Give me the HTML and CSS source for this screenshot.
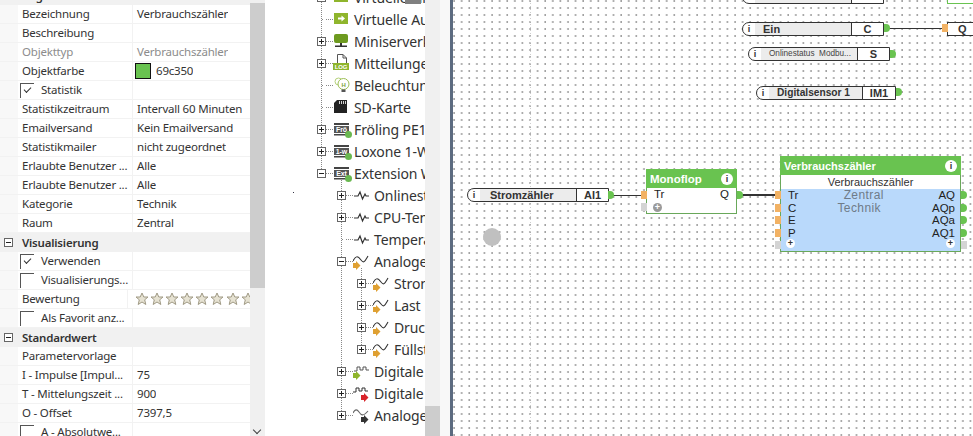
FILE: index.html
```html
<!DOCTYPE html>
<html>
  <head>
    <meta charset="utf-8" />
    <title>Verbrauchszähler</title>
    <link rel="stylesheet" href="styles.css">
  </head>
  <body>
    <!-- Icons -->
    <svg class="defs" width="0" height="0">
      <symbol id="i-vout" viewBox="0 0 20 20">
        <rect x="1" y="4" width="14" height="11" fill="#8fb52c"/>
        <path d="M5 8.500h3.500V6.500L12 9.500 8.500 12.500V10.500H5z" fill="#fff"/>
      </symbol>
      <symbol id="i-ms" viewBox="0 0 20 20">
        <rect x="1" y="3" width="14" height="9" rx="2" fill="#6d9a1f"/>
        <rect x="7" y="12" width="2" height="3" fill="#333"/>
        <rect x="2" y="14.500" width="12" height="1.500" fill="#333"/>
      </symbol>
      <symbol id="i-log" viewBox="0 0 20 20">
        <path d="M4.500 12V1.500H10L13.500 5V12M10 1.500V5H13.500" fill="#fff" stroke="#555"/>
        <rect x="0" y="10" width="16" height="7" fill="#8fb52c"/>
        <text x="8" y="15.500" class="ic-txt" font-size="6" text-anchor="middle">LOG</text>
      </symbol>
      <symbol id="i-bulb" viewBox="0 0 20 20">
        <circle cx="5.500" cy="6.500" r="3.500" fill="none" stroke="#b5d27a"/>
        <circle cx="10.500" cy="9" r="5.500" fill="#fff" stroke="#9dbf55"/>
        <rect x="8.500" y="14.500" width="4" height="2.500" fill="#555"/>
        <text x="10.500" y="11.500" class="ic-h" font-size="6" text-anchor="middle">H</text>
      </symbol>
      <symbol id="i-sd" viewBox="0 0 20 20">
        <path d="M4 3H14V16H1V6z" fill="#222"/>
        <path d="M6.500 4v3M8.500 4v3M10.500 4v3M12.500 4v3" stroke="#fff" stroke-width=".8"/>
      </symbol>
      <symbol id="i-ext" viewBox="0 0 20 20">
        <rect x="1" y="4" width="15" height="2" fill="#444"/>
        <rect x="1" y="7" width="15" height="7" fill="#555"/>
        <rect x="1" y="15" width="15" height="1.500" fill="#444"/>
      </symbol>
      <symbol id="i-pulse" viewBox="0 0 20 20">
        <path d="M1 11H5L7 7 9.500 14 12 9 13 11H16" fill="none" stroke="#333" stroke-width="1.200"/>
      </symbol>
      <symbol id="i-sine" viewBox="0 0 20 20">
        <path d="M0 10C3 4 5 5 8 9S12 10 15 5" fill="none" stroke="#333" stroke-width="1.100"/>
        <path d="M0 12H3V10L7.500 14.500 3 19V17H0z" fill="#dfa032"/>
      </symbol>
      <symbol id="i-dig" viewBox="0 0 20 20">
        <path d="M1 10H4V6H7V9H10V6H13V9H16" fill="none" stroke="#555"/>
        <path d="M0 12H3V10L7.500 14.500 3 19V17H0z" fill="#8fb52c"/>
      </symbol>
      <symbol id="i-digout" viewBox="0 0 20 20">
        <path d="M0 9H3V5H6V8H9V5H12V8H15" fill="none" stroke="#333"/>
        <path d="M8 12H11V10L15.500 14.500 11 19V17H8z" fill="#d8232a"/>
      </symbol>
      <symbol id="i-aout" viewBox="0 0 20 20">
        <path d="M0 8C2 4 4 4 6 7S10 12 15 6" fill="none" stroke="#666" stroke-width="1.100"/>
        <path d="M8 12H11V10L15.500 14.500 11 19V17H8z" fill="#333"/>
      </symbol>
      <symbol id="i-star" viewBox="0 0 14 14">
        <path d="M7 1L8.800 5H13L9.700 7.800 10.800 12.500 7 10 3.200 12.500 4.300 7.800 1 5H5.200z" fill="#e6e2d2" stroke="#a09a85"/>
      </symbol>
    </svg>

    <div class="app">
      <!-- Eigenschaften -->
      <section class="props">
        <div class="pg">
          <div class="pg-head"><span class="box minus"></span><b>Allgemein</b></div>
          <div class="pg-row"><span class="lab">Bezeichnung</span><span class="val">Verbrauchszähler</span></div>
          <div class="pg-row"><span class="lab">Beschreibung</span><span class="val"></span></div>
          <div class="pg-row off"><span class="lab">Objekttyp</span><span class="val">Verbrauchszähler</span></div>
          <div class="pg-row"><span class="lab">Objektfarbe</span><span class="val"><i class="swatch"></i>69c350</span></div>
          <div class="pg-row"><span class="lab chk on">Statistik</span><span class="val"></span></div>
          <div class="pg-row"><span class="lab">Statistikzeitraum</span><span class="val">Intervall 60 Minuten</span></div>
          <div class="pg-row"><span class="lab">Emailversand</span><span class="val">Kein Emailversand</span></div>
          <div class="pg-row"><span class="lab">Statistikmailer</span><span class="val">nicht zugeordnet</span></div>
          <div class="pg-row"><span class="lab">Erlaubte Benutzer ...</span><span class="val">Alle</span></div>
          <div class="pg-row"><span class="lab">Erlaubte Benutzer ...</span><span class="val">Alle</span></div>
          <div class="pg-row"><span class="lab">Kategorie</span><span class="val">Technik</span></div>
          <div class="pg-row"><span class="lab">Raum</span><span class="val">Zentral</span></div>
          <div class="pg-head"><span class="box minus"></span><b>Visualisierung</b></div>
          <div class="pg-row"><span class="lab chk on">Verwenden</span><span class="val"></span></div>
          <div class="pg-row"><span class="lab chk">Visualisierungs...</span><span class="val"></span></div>
          <div class="pg-row">
            <span class="lab">Bewertung</span>
            <span class="val stars">
              <svg><use href="#i-star"/></svg><svg><use href="#i-star"/></svg><svg><use href="#i-star"/></svg><svg><use href="#i-star"/></svg><svg><use href="#i-star"/></svg><svg><use href="#i-star"/></svg><svg><use href="#i-star"/></svg><svg><use href="#i-star"/></svg>
            </span>
          </div>
          <div class="pg-row"><span class="lab chk">Als Favorit anz...</span><span class="val"></span></div>
          <div class="pg-head"><span class="box minus"></span><b>Standardwert</b></div>
          <div class="pg-row"><span class="lab">Parametervorlage</span><span class="val"></span></div>
          <div class="pg-row"><span class="lab">I - Impulse [Impul...</span><span class="val">75</span></div>
          <div class="pg-row"><span class="lab">T - Mittelungszeit ...</span><span class="val">900</span></div>
          <div class="pg-row"><span class="lab">O - Offset</span><span class="val">7397,5</span></div>
          <div class="pg-row"><span class="lab chk">A - Absolutwe...</span><span class="val"></span></div>
        </div>
        <div class="sbar sbar-props"><div class="thumb"></div><span class="chev"></span></div>
      </section>

      <!-- Peripherie-Baum -->
      <section class="tree">
        <span class="vline v0"></span>
        <span class="vline v1"></span>
        <span class="vline v2"></span>
        <span class="tip"></span>
        <span class="speck"></span>
        <div class="list">
          <div class="node l0"><span class="box plus"></span><i class="dash"></i><svg class="ic"><use href="#i-vout"/></svg>Virtuelle Eingänge</div>
          <div class="node l0"><span class="nobox"></span><i class="dash"></i><svg class="ic"><use href="#i-vout"/></svg>Virtuelle Ausgänge</div>
          <div class="node l0"><span class="box plus"></span><i class="dash"></i><svg class="ic"><use href="#i-ms"/></svg>Miniserverkommunikation</div>
          <div class="node l0"><span class="box plus"></span><i class="dash"></i><svg class="ic"><use href="#i-log"/></svg>Mitteilungen</div>
          <div class="node l0"><span class="nobox"></span><i class="dash"></i><svg class="ic"><use href="#i-bulb"/></svg>Beleuchtungsgruppen</div>
          <div class="node l0"><span class="nobox"></span><i class="dash"></i><svg class="ic"><use href="#i-sd"/></svg>SD-Karte</div>
          <div class="node l0"><span class="box plus"></span><i class="dash"></i><span class="ext"><svg class="ic"><use href="#i-ext"/></svg><em>Frö</em><u></u></span>Fröling PE1</div>
          <div class="node l0"><span class="box plus"></span><i class="dash"></i><span class="ext"><svg class="ic"><use href="#i-ext"/></svg><em>1-w</em><u></u></span>Loxone 1-Wire</div>
          <div class="node l0"><span class="box minus"></span><i class="dash"></i><span class="ext"><svg class="ic"><use href="#i-ext"/></svg><em>Ext</em><u></u></span>Extension Wasser</div>
          <div class="node l1"><span class="box plus"></span><i class="dash"></i><svg class="ic"><use href="#i-pulse"/></svg>Onlinestatus</div>
          <div class="node l1"><span class="box plus"></span><i class="dash"></i><svg class="ic"><use href="#i-pulse"/></svg>CPU-Temperatur</div>
          <div class="node l1"><span class="nobox"></span><i class="dash"></i><svg class="ic"><use href="#i-pulse"/></svg>Temperatur</div>
          <div class="node l1"><span class="box minus"></span><i class="dash"></i><svg class="ic"><use href="#i-sine"/></svg>Analoge Eingänge</div>
          <div class="node l2"><span class="box plus"></span><i class="dash"></i><svg class="ic"><use href="#i-sine"/></svg>Stromzähler</div>
          <div class="node l2"><span class="box plus"></span><i class="dash"></i><svg class="ic"><use href="#i-sine"/></svg>Last</div>
          <div class="node l2"><span class="box plus"></span><i class="dash"></i><svg class="ic"><use href="#i-sine"/></svg>Druck</div>
          <div class="node l2"><span class="box plus"></span><i class="dash"></i><svg class="ic"><use href="#i-sine"/></svg>Füllstand</div>
          <div class="node l1"><span class="box plus"></span><i class="dash"></i><svg class="ic"><use href="#i-dig"/></svg>Digitale Eingänge</div>
          <div class="node l1"><span class="box plus"></span><i class="dash"></i><svg class="ic"><use href="#i-digout"/></svg>Digitale Ausgänge</div>
          <div class="node l1"><span class="box plus"></span><i class="dash"></i><svg class="ic"><use href="#i-aout"/></svg>Analoge Ausgänge</div>
        </div>
      </section>
      <div class="sbar sbar-tree"><div class="thumb"></div></div>
      <div class="gutter"></div>

      <!-- Zeichenfläche -->
      <section class="canvas">
        <span class="pageline"></span>

        <div class="tag t-top"><span class="tag-i"></span><span class="tag-name"></span><span class="tag-io"></span></div>
        <div class="tag t-ein"><span class="tag-i">i</span><span class="tag-name">Ein</span><span class="tag-io">C</span></div>
        <div class="tag t-online"><span class="tag-i">i</span><span class="tag-name small">Onlinestatus&nbsp; Modbu...</span><span class="tag-io">S</span></div>
        <div class="tag t-digi"><span class="tag-i">i</span><span class="tag-name">Digitalsensor 1</span><span class="tag-io">IM1</span></div>
        <div class="tag t-strom"><span class="tag-i">i</span><span class="tag-name">Stromzähler</span><span class="tag-io">AI1</span></div>

        <div class="stub s-top"></div>
        <div class="stub s-q">Q</div>

        <span class="wire w-ein"></span>
        <span class="wire w-strom"></span>
        <span class="wire w-mono"></span>

        <span class="port out p-ein"></span>
        <span class="port out p-online"></span>
        <span class="port out p-digi"></span>
        <span class="port out p-strom"></span>
        <span class="port in p-q"></span>

        <div class="block monoflop">
          <div class="b-head">Monoflop<span class="info">i</span></div>
          <div class="b-ios"><span>Tr</span><span>Q</span></div>
          <span class="plus-btn grey"></span>
        </div>
        <span class="port in p-mono"></span>
        <span class="port idle p-mono2"></span>
        <span class="port out p-monoq"></span>

        <div class="block counter">
          <div class="b-head">Verbrauchszähler<span class="info">i</span></div>
          <div class="b-title">Verbrauchszähler</div>
          <div class="b-body">
            <div class="col"><span>Tr</span><span>C</span><span>E</span><span>P</span></div>
            <div class="col mid"><span>Zentral</span><span class="tk">Technik</span></div>
            <div class="col end"><span>AQ</span><span>AQp</span><span>AQa</span><span>AQ1</span></div>
          </div>
          <div class="b-foot"><span class="plus-btn"></span><span class="plus-btn"></span></div>
        </div>
        <span class="port in c-l1"></span>
        <span class="port in c-l2"></span>
        <span class="port in c-l3"></span>
        <span class="port in c-l4"></span>
        <span class="port idle c-l5"></span>
        <span class="port out c-r1"></span>
        <span class="port out c-r2"></span>
        <span class="port out c-r3"></span>
        <span class="port out c-r4"></span>
        <span class="port idle c-r5"></span>

        <span class="cursor"></span>
        <div class="pagefoot">Verbrauchszähler /Zentral /Bereich Technik /Wichtige Werte</div>
      </section>
    </div>
  </body>
</html>
```

FILE: styles.css
```css
html, body {
  margin: 0;
  height: 100%;
  overflow: hidden;
  background: #fff;
}
.defs {
  position: absolute;
}
.app {
  display: flex;
  width: 973px;
  height: 436px;
  overflow: hidden;
}

/* Eigenschaften */
.props {
  display: flex;
  width: 265px;
  height: 436px;
  flex: none;
  font: 11.5px "Noto Sans", "Open Sans", sans-serif;
  letter-spacing: -0.2px;
  color: #333;
  overflow: hidden;
}
.pg {
  width: 250px;
  margin-top: -14px;
  background: linear-gradient(to right, #f8f8f8 18px, #fff 18px);
}
.pg-head {
  display: flex;
  align-items: center;
  height: 19px;
  background: #f1f1f1;
  padding-left: 4px;
}
.pg-head b {
  margin-left: 9px;
  font-weight: 600;
}
.pg-row {
  display: flex;
  height: 19px;
  box-sizing: border-box;
  padding-left: 18px;
  border-bottom: 1px solid #f2f2f2;
  line-height: 18px;
  white-space: nowrap;
}
.lab {
  position: relative;
  width: 110px;
  padding-left: 4px;
  border-right: 1px solid #f2f2f2;
  overflow: hidden;
}
.val {
  display: flex;
  align-items: center;
  padding-left: 4px;
  overflow: hidden;
}
.off {
  color: #8c8c8c;
}
.swatch {
  flex: none;
  width: 16px;
  height: 16px;
  box-sizing: border-box;
  margin: 0 5px 0 -2px;
  border: 1px solid #111;
  background: #69c350;
}
.chk {
  padding-left: 23px;
  width: 91px;
}
.chk::before {
  content: "";
  position: absolute;
  left: 2px;
  top: 2px;
  width: 13px;
  height: 14px;
  border-top: 1px solid #555;
  border-left: 1px solid #555;
}
.chk.on::after {
  content: "";
  position: absolute;
  left: 6px;
  top: 6px;
  width: 6px;
  height: 3px;
  border-left: 1px solid #333;
  border-bottom: 1px solid #333;
  transform: rotate(-45deg);
}
.stars {
  padding-left: 7px;
}
.stars svg {
  width: 14px;
  height: 14px;
  flex: none;
  margin-right: 1.200px;
}

.sbar {
  position: relative;
  width: 15px;
  height: 436px;
  flex: none;
  background: #f0f0f0;
}
.thumb {
  position: absolute;
  left: 0;
  right: 0;
  background: #cdcdcd;
}
.sbar-props .thumb {
  top: 3px;
  height: 285px;
}
.chev {
  position: absolute;
  left: 4px;
  top: 427px;
  width: 5px;
  height: 5px;
  border-right: 1px solid #444;
  border-bottom: 1px solid #444;
  transform: rotate(45deg);
}
.sbar-tree .thumb {
  top: 406px;
  bottom: 0;
}

/* Kästchen + / - */
.box {
  position: relative;
  display: block;
  flex: none;
  width: 9px;
  height: 9px;
  border: 1px solid #666;
  box-sizing: border-box;
  background: #fff;
}
.box::before {
  content: "";
  position: absolute;
  left: 1px;
  top: 3px;
  width: 5px;
  height: 1px;
  background: #222;
}
.box.plus::after {
  content: "";
  position: absolute;
  left: 3px;
  top: 1px;
  width: 1px;
  height: 5px;
  background: #222;
}

/* Baum */
.tree {
  position: relative;
  width: 160px;
  height: 436px;
  flex: none;
  font: 14px "Noto Sans", "Open Sans", sans-serif;
  letter-spacing: -0.1px;
  color: #333;
  overflow: hidden;
}
.list {
  margin-top: -14px;
}
.node {
  display: flex;
  align-items: center;
  height: 22px;
  white-space: nowrap;
}
.l0 { padding-left: 52px; }
.l1 { padding-left: 72px; }
.l2 { padding-left: 92px; }
.nobox {
  flex: none;
  width: 9px;
  height: 1px;
  background: repeating-linear-gradient(to right, transparent 0 5px, #888 5px 6px, transparent 6px 7px);
}
.dash {
  flex: none;
  width: 7px;
  height: 1px;
  background: repeating-linear-gradient(to right, #888 0 1px, transparent 1px 2px);
}
.ic {
  flex: none;
  width: 20px;
  height: 20px;
  margin-right: 1px;
}
.ic-txt {
  font-family: "Liberation Sans", sans-serif;
  font-weight: 700;
  fill: #fff;
}
.ic-h {
  font-family: "Liberation Sans", sans-serif;
  font-weight: 700;
  fill: #7da33a;
}
.ext {
  position: relative;
  flex: none;
  width: 21px;
  height: 20px;
}
.ext em {
  position: absolute;
  left: 2px;
  top: 6px;
  width: 13px;
  text-align: center;
  font: 700 7px/9px "Liberation Sans", sans-serif;
  color: #fff;
}
.ext u {
  position: absolute;
  left: 12px;
  top: 12px;
  width: 7px;
  height: 7px;
  border-radius: 50%;
  background: #69b850;
}
.vline {
  position: absolute;
  width: 1px;
  background: repeating-linear-gradient(to bottom, #888 0 1px, transparent 1px 2px);
}
.v0 { left: 56px; top: 0; height: 170px; }
.v1 { left: 76px; top: 180px; height: 236px; }
.v2 { left: 96px; top: 268px; height: 82px; }
.tip {
  position: absolute;
  left: 140px;
  top: 0;
  width: 16px;
  height: 4px;
  background: #808080;
}
.speck {
  position: absolute;
  left: 28px;
  top: 192px;
  width: 1px;
  height: 1px;
  background: #334;
}

.gutter {
  width: 10px;
  height: 436px;
  flex: none;
  background: #f8f8f8;
  border-right: 3px solid #5c6b80;
}

/* Zeichenfläche */
.canvas {
  position: relative;
  flex: 1;
  height: 436px;
  overflow: hidden;
  background-color: #fff;
  background-image: radial-gradient(circle at 1px 1px, #555 0.5px, transparent 0.85px);
  background-size: 7.6px 7px;
  font-family: "Liberation Sans", Arial, sans-serif;
  color: #222;
}
.pageline {
  position: absolute;
  left: 77px;
  top: 0;
  width: 1px;
  height: 436px;
  background: repeating-linear-gradient(to bottom, #ccc 0 1px, transparent 1px 3px);
}
.tag {
  position: absolute;
  display: flex;
  height: 14px;
  box-sizing: border-box;
  border: 1px solid #333;
  border-radius: 7px 0 0 7px;
  background: #fff;
  font-size: 11px;
  line-height: 12px;
  font-weight: 700;
  color: #333;
}
.tag-i {
  flex: none;
  width: 12px;
  font-size: 9px;
  text-align: center;
}
.tag-name {
  flex: 1;
  padding-left: 8px;
  background: #ececec;
  overflow: hidden;
  white-space: nowrap;
}
.tag-name.small {
  font-size: 8.200px;
  font-weight: 400;
  color: #444;
}
.tag-io {
  flex: none;
  border-left: 1px solid #333;
  text-align: center;
}
.t-top { left: 289px; top: -10px; width: 142px; }
.t-top .tag-io { width: 31px; }
.t-ein { left: 289px; top: 22px; width: 142px; }
.t-ein .tag-io { width: 31px; }
.t-online { left: 295px; top: 47px; width: 142px; }
.t-online .tag-io { width: 31px; }
.t-digi { left: 303px; top: 86px; width: 140px; }
.t-digi .tag-io { width: 32px; }
.t-digi .tag-name { font-size: 10.200px; }
.t-strom { left: 14px; top: 188px; width: 142px; }
.t-strom .tag-io { width: 31px; }
.t-strom .tag-name { padding-left: 10px; }

.stub {
  position: absolute;
  left: 494px;
  width: 40px;
  height: 14px;
  box-sizing: border-box;
  border: 1px solid #333;
  background: #fff;
  font-size: 11px;
  font-weight: 700;
  line-height: 12px;
  padding-left: 10px;
  color: #333;
}
.s-top { top: -10px; border-color: #69c350; }
.s-q { top: 22px; }

.wire {
  position: absolute;
  height: 1px;
  background: #333;
}
.w-ein { left: 436px; top: 28px; width: 54px; }
.w-strom { left: 160px; top: 195px; width: 30px; }
.w-mono { left: 288px; top: 194px; width: 36px; height: 2px; }

.port {
  position: absolute;
  width: 6px;
  height: 8px;
}
.port.out {
  background: #69c350;
  border-radius: 0 4px 4px 0;
}
.port.in {
  background: #f2b264;
}
.port.idle {
  background: #d4d4d4;
}
.p-ein { left: 431px; top: 24px; }
.p-online { left: 437px; top: 50px; }
.p-digi { left: 443px; top: 88px; }
.p-strom { left: 155px; top: 191px; }
.p-q { left: 489px; top: 24px; }
.p-mono { left: 188px; top: 191px; }
.p-mono2 { left: 188px; top: 203px; }
.p-monoq { left: 284px; top: 191px; }
.c-l1 { left: 322px; top: 191px; }
.c-l2 { left: 322px; top: 204px; }
.c-l3 { left: 322px; top: 216px; }
.c-l4 { left: 322px; top: 229px; }
.c-l5 { left: 322px; top: 241px; }
.c-r1 { left: 508px; top: 191px; }
.c-r2 { left: 508px; top: 204px; }
.c-r3 { left: 508px; top: 216px; }
.c-r4 { left: 508px; top: 229px; }
.c-r5 { left: 508px; top: 241px; }

.block {
  position: absolute;
  box-sizing: border-box;
  border: 1px solid #69a85a;
  background: #fff;
  font-size: 11.500px;
}
.b-head {
  display: flex;
  justify-content: space-between;
  align-items: center;
  height: 19px;
  padding: 0 4px;
  margin: -1px -1px 0;
  background: #69c350;
  color: #fff;
  font-size: 11.500px;
  font-weight: 700;
}
.counter .b-head {
  font-size: 11px;
}
.info {
  width: 12px;
  height: 12px;
  border-radius: 50%;
  background: #fff;
  color: #333;
  font-size: 9px;
  line-height: 12px;
  text-align: center;
}
.monoflop {
  left: 193px;
  top: 169px;
  width: 91px;
  height: 45px;
}
.b-ios {
  display: flex;
  justify-content: space-between;
  padding: 0 7px;
  height: 13px;
  line-height: 13px;
}
.plus-btn {
  position: relative;
  display: block;
  width: 9px;
  height: 9px;
  border-radius: 50%;
  background: #fff;
}
.plus-btn::before {
  content: "+";
  position: absolute;
  inset: 0;
  font: 700 9px/9px "Liberation Sans", sans-serif;
  text-align: center;
  color: #333;
}
.plus-btn.grey {
  margin: 2px 0 0 6px;
  background: #9a9a9a;
}
.plus-btn.grey::before {
  color: #fff;
}
.counter {
  left: 327px;
  top: 156px;
  width: 181px;
  height: 96px;
  background: #b9d9fb;
}
.b-title {
  height: 14px;
  line-height: 14px;
  background: #fff;
  text-align: center;
  color: #333;
  font-size: 11px;
}
.b-body {
  display: flex;
  justify-content: space-between;
  padding: 0 5px 0 7px;
  height: 50px;
}
.col {
  display: flex;
  flex-direction: column;
}
.col span {
  height: 12.600px;
  line-height: 12.600px;
}
.col.mid {
  flex: 1;
  padding-right: 3px;
  align-items: center;
  color: #6f7b88;
  font-size: 12px;
  letter-spacing: 0.4px;
}
.tk {
  margin-right: 9px;
}
.col.end {
  align-items: flex-end;
}
.b-foot {
  display: flex;
  justify-content: space-between;
  padding: 0 5px;
}
.cursor {
  position: absolute;
  left: 30px;
  top: 228px;
  width: 18px;
  height: 18px;
  border-radius: 50%;
  background: #c0c0c0;
}
.pagefoot {
  position: absolute;
  left: 77px;
  top: 433px;
  width: 320px;
  font-size: 11.500px;
  font-weight: 700;
  line-height: 14px;
  color: #111;
  white-space: nowrap;
}
```
